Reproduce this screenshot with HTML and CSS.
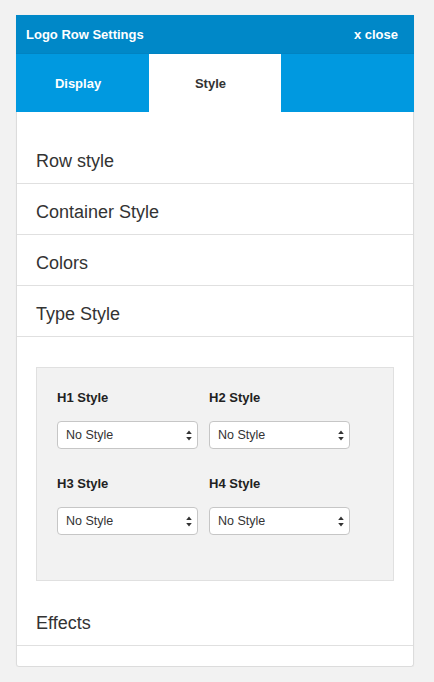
FILE: index.html
```html
<!DOCTYPE html>
<html>
<head>
<meta charset="utf-8">
<link rel="stylesheet" href="styles.css">
</head>
<body>
<div class="page">
  <div class="card">
    <div class="header">
      <span class="title">Logo Row Settings</span>
      <span class="close">x close</span>
    </div>
    <div class="tabs">
      <div class="tab">Display</div>
      <div class="tab active">Style</div>
      <div class="tab"></div>
    </div>
    <div class="content">
      <div class="row">Row style</div>
      <div class="row">Container Style</div>
      <div class="row">Colors</div>
      <div class="row">Type Style</div>
      <div class="panel">
        <div class="grid">
          <div class="field">
            <div class="label">H1 Style</div>
            <div class="select"><span>No Style</span><svg class="arrows" width="6" height="11" viewBox="0 0 6 11"><path d="M3 0.5 L5.8 4 L0.2 4 Z M3 10.5 L5.8 7 L0.2 7 Z" fill="#333"/></svg></div>
          </div>
          <div class="field">
            <div class="label">H2 Style</div>
            <div class="select"><span>No Style</span><svg class="arrows" width="6" height="11" viewBox="0 0 6 11"><path d="M3 0.5 L5.8 4 L0.2 4 Z M3 10.5 L5.8 7 L0.2 7 Z" fill="#333"/></svg></div>
          </div>
          <div class="field">
            <div class="label">H3 Style</div>
            <div class="select"><span>No Style</span><svg class="arrows" width="6" height="11" viewBox="0 0 6 11"><path d="M3 0.5 L5.8 4 L0.2 4 Z M3 10.5 L5.8 7 L0.2 7 Z" fill="#333"/></svg></div>
          </div>
          <div class="field">
            <div class="label">H4 Style</div>
            <div class="select"><span>No Style</span><svg class="arrows" width="6" height="11" viewBox="0 0 6 11"><path d="M3 0.5 L5.8 4 L0.2 4 Z M3 10.5 L5.8 7 L0.2 7 Z" fill="#333"/></svg></div>
          </div>
        </div>
      </div>
      <div class="row effects">Effects</div>
    </div>
  </div>
</div>
</body>
</html>
```
FILE: styles.css
```css
* { box-sizing: border-box; }
html, body {
  margin: 0;
  padding: 0;
  background: #f2f2f2;
  font-family: "Liberation Sans", Arial, Helvetica, sans-serif;
  color: #333;
}
.page {
  padding: 15px 0 0 16px;
}
.card {
  width: 398px;
  background: #fff;
  border-radius: 0 0 3px 3px;
  box-shadow: 0 0 1px rgba(0,0,0,0.08);
}
.header {
  height: 39px;
  background: #0088c8;
  display: flex;
  align-items: center;
  justify-content: space-between;
  padding: 0 16px 0 10px;
  color: #fff;
  font-size: 13px;
  font-weight: bold;
  border-bottom: 1px solid #0083c2;
}
.tabs {
  height: 58px;
  display: grid;
  grid-template-columns: 133px 132px 133px;
  background: #0099e0;
}
.tab {
  display: flex;
  align-items: center;
  justify-content: center;
  padding-right: 9px;
  color: #fff;
  font-size: 13px;
  font-weight: bold;
}
.tab.active {
  background: #fff;
  color: #333;
}
.content {
  border: 1px solid #dcdcdc;
  border-top: none;
  border-radius: 0 0 3px 3px;
  padding: 21px 0 20px;
}
.row {
  height: 51px;
  padding: 17px 0 0 19px;
  font-size: 18px;
  line-height: 22px;
  color: #333;
  border-bottom: 1px solid #e0e0e0;
}
.panel {
  margin: 30px 19px 14px;
  background: #f2f2f2;
  border: 1px solid #e0e0e0;
  padding: 21px 0 45px 20px;
}
.grid {
  display: grid;
  grid-template-columns: 141px 141px;
  column-gap: 11px;
  row-gap: 26px;
}
.label {
  font-size: 13px;
  font-weight: bold;
  line-height: 18px;
  margin-bottom: 14px;
  color: #222;
}
.select {
  height: 28px;
  background: #fff;
  border: 1px solid #c6c6c6;
  border-radius: 4px;
  display: flex;
  align-items: center;
  justify-content: space-between;
  padding: 0 5px 0 8px;
  font-size: 12.5px;
  color: #333;
}
.arrows {
  display: block;
}
.effects {
  border-bottom: 1px solid #e0e0e0;
}
```
